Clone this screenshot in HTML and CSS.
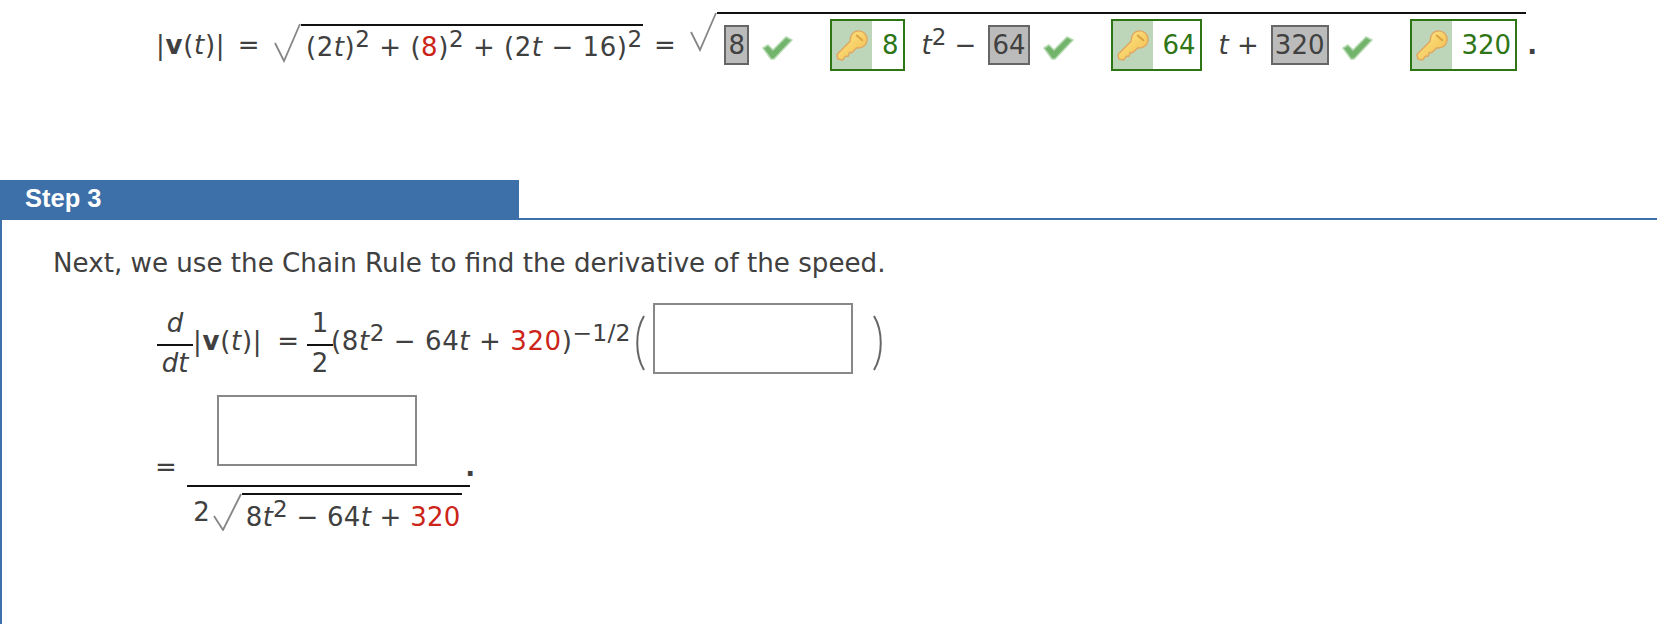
FILE: index.html
```html
<!DOCTYPE html>
<html lang="en">
<head>
    <meta charset="UTF-8">
    <meta name="viewport" content="width=device-width, initial-scale=1.0">
    <title>Step 3</title>
    <link rel="stylesheet" href="styles.css">
</head>
<body>
    <svg class="icon-defs" width="0" height="0">
        <defs>
            <linearGradient id="key-fill" x1="0" y1="0" x2="1" y2="1">
                <stop offset="0" stop-color="#fdeb8c"/>
                <stop offset="1" stop-color="#f2b94a"/>
            </linearGradient>
            <symbol id="key" viewBox="0 0 34 34">
                <path d="M1 27 L15 13 C15 7 18 2 24 2 C29 2 33 6 33 11 C33 17 28 21 22 20 L17 25 L14 25 L13 29 L10 29 L7 33 L2 32 Z" fill="url(#key-fill)" stroke="#e0a860" stroke-width="1.500" stroke-linejoin="round"/>
                <path d="M22 7 L28 12" fill="none" stroke="#d9a13f" stroke-width="2" stroke-linecap="round"/>
            </symbol>
            <symbol id="check" viewBox="0 0 31 24">
                <path d="M1 12 L6 9 L11 14 L24 1 L30 4 L12 23 L9 23 Z" fill="#72b46c" stroke="#b5d9b0" stroke-width="1.500" stroke-linejoin="round"/>
            </symbol>
        </defs>
    </svg>

    <div class="math-top">
        <span class="mi abs">|<b>v</b>(<i>t</i>)|</span>
        <span class="eq">=</span>
        <span class="sqrt">
            <svg class="radical radical-small" viewBox="0 0 27 40"><path d="M1 20 L10 38 L26 1"/></svg>
            <span class="radicand radicand-small">(2<i>t</i>)<sup>2</sup> + (<span class="red">8</span>)<sup>2</sup> + (2<i>t</i> − 16)<sup>2</sup></span>
        </span>
        <span class="eq eq-second">=</span>
        <span class="sqrt">
            <svg class="radical radical-big" viewBox="0 0 27 40"><path d="M1 20 L10 38 L26 1"/></svg>
            <span class="radicand radicand-big">
                <span class="given">8</span>
                <svg class="check"><use href="#check"/></svg>
                <span class="answer"><span class="key-cell"><svg class="key"><use href="#key"/></svg></span><span class="answer-val">8</span></span>
                <span class="term"><i>t</i><sup>2</sup> −</span>
                <span class="given">64</span>
                <svg class="check"><use href="#check"/></svg>
                <span class="answer"><span class="key-cell"><svg class="key"><use href="#key"/></svg></span><span class="answer-val">64</span></span>
                <span class="term"><i>t</i> +</span>
                <span class="given">320</span>
                <svg class="check"><use href="#check"/></svg>
                <span class="answer"><span class="key-cell"><svg class="key"><use href="#key"/></svg></span><span class="answer-val">320</span></span>
            </span>
        </span>
        <span class="end-dot">.</span>
    </div>

    <div class="step-head">Step 3</div>
    <div class="step-body">
        <p class="step-text">Next, we use the Chain Rule to find the derivative of the speed.</p>

        <div class="eq-one">
            <span class="frac frac-d"><span class="num"><i>d</i></span><span class="den"><i>dt</i></span></span>
            <span class="mi abs">|<b>v</b>(<i>t</i>)|</span>
            <span class="eq">=</span>
            <span class="frac frac-half"><span class="num">1</span><span class="den">2</span></span>
            <span class="mi mi-long">(8<i>t</i><sup>2</sup> − 64<i>t</i> + <span class="red">320</span>)<sup class="sup-power">−1/2</sup></span>
            <svg class="paren" viewBox="0 0 12 56"><path d="M11 1 C2 16 2 40 11 55"/></svg>
            <span class="blank"></span>
            <svg class="paren paren-close" viewBox="0 0 12 56"><path d="M1 1 C10 16 10 40 1 55"/></svg>
        </div>

        <div class="eq-two">
            <span class="eq eq-lead">=</span>
            <span class="big-frac">
                <span class="big-num"><span class="blank"></span></span>
                <span class="big-den">
                    <span class="coef">2</span>
                    <svg class="radical radical-den" viewBox="0 0 29 38"><path d="M1 23 L10 37 L28 1"/></svg>
                    <span class="radicand radicand-den">8<i>t</i><sup>2</sup> − 64<i>t</i> + <span class="red">320</span></span>
                </span>
            </span>
            <span class="end-dot end-dot-two">.</span>
        </div>
    </div>
</body>
</html>
```

FILE: styles.css
```css
html, body {
    margin: 0;
    padding: 0;
    height: 624px;
    overflow: hidden;
    background: white;
}
body {
    font-family: "DejaVu Sans", Verdana, sans-serif;
    font-size: 26px;
    color: #404040;
}
.icon-defs {
    position: absolute;
}
sup {
    font-size: 23px;
    line-height: 0;
    vertical-align: 9px;
}
.red {
    color: #cc2418;
}
.abs {
    letter-spacing: 0.7px;
}

/* Top equation */
.math-top {
    display: flex;
    align-items: center;
    height: 66px;
    padding: 12px 0 0 156px;
    margin-bottom: 102px;
}
.eq {
    margin: 0 14.500px 0 12.500px;
}
.eq-second {
    margin-left: 11.500px;
}
.sqrt {
    display: flex;
    align-items: flex-end;
}
.radical {
    fill: none;
    stroke: #858585;
    stroke-width: 1.800;
    flex: none;
}
.radical-small {
    width: 27px;
    height: 40px;
    margin-bottom: 5px;
}
.radical-big {
    width: 27px;
    height: 40px;
    margin-bottom: 26px;
}
.radicand {
    border-top: 2px solid #111;
    white-space: nowrap;
}
.radicand-small {
    line-height: 42px;
    padding-left: 5px;
    letter-spacing: 0.55px;
}
.radicand-big {
    display: flex;
    align-items: center;
    height: 66px;
    padding: 0 9px 3px 7px;
    box-sizing: border-box;
}
.given {
    border: 2px solid #666;
    background: #bbb;
    padding: 0 2px;
    height: 40px;
    line-height: 36px;
    box-sizing: border-box;
    margin-right: 13px;
}
.check {
    width: 31px;
    height: 24px;
    margin-top: 6px;
}
.answer {
    display: flex;
    border: 2px solid #2e7516;
    height: 52px;
    box-sizing: border-box;
    margin-left: 37px;
}
.key-cell {
    display: flex;
    align-items: center;
    justify-content: center;
    width: 40px;
    background: #bdd5b8;
}
.key {
    width: 32px;
    height: 32px;
}
.answer-val {
    color: #2e7516;
    line-height: 48px;
    padding: 0 4px 0 10px;
}
.term {
    margin: 0 12px 0 17px;
}
.end-dot {
    margin-left: 1px;
    font-weight: bold;
}

/* Step panel */
.step-head {
    width: 519px;
    height: 38px;
    line-height: 37px;
    padding-left: 25px;
    box-sizing: border-box;
    background: #3d6fa8;
    color: white;
    font-family: "Liberation Sans", Arial, sans-serif;
    font-weight: bold;
    font-size: 25.500px;
}
.step-body {
    border-top: 2px solid #3d6fa8;
    border-left: 2px solid #3d6fa8;
    height: 404px;
    padding-left: 51px;
}
.step-text {
    margin: 29px 0 0;
    line-height: 28px;
    font-size: 26.150px;
}

/* Equations */
.eq-one {
    display: flex;
    align-items: flex-start;
    height: 71px;
    margin-top: 26px;
    padding-left: 104px;
}
.eq-one .mi, .eq-one .eq {
    line-height: 71px;
    margin-top: 3px;
}
.eq-one .eq {
    margin-left: 15px;
    margin-right: 8px;
}
.frac {
    display: flex;
    flex-direction: column;
    align-items: center;
}
.num {
    border-bottom: 2px solid #111;
    align-self: stretch;
    line-height: 41px;
    text-align: center;
}
.den {
    line-height: 26px;
    padding-top: 4px;
}
.frac-d {
    width: 36px;
}
.frac-half {
    width: 26px;
    margin-right: -2px;
}
.mi-long {
    letter-spacing: 0.6px;
}
.sup-power {
    font-size: 23.500px;
    letter-spacing: 0.2px;
}
.paren {
    width: 12px;
    height: 56px;
    margin: 12px 0 0 2px;
    fill: none;
    stroke: #666;
    stroke-width: 2;
    flex: none;
}
.paren-close {
    margin-left: 20px;
}
.blank {
    display: block;
    width: 200px;
    height: 71px;
    box-sizing: border-box;
    border: 2px solid #888;
    background: white;
}
.eq-one .blank {
    margin-left: 8px;
}
.eq-two {
    display: flex;
    align-items: center;
    margin-top: 21px;
    padding-left: 102px;
}
.eq-lead {
    margin: 0 10.500px 0 0;
}
.big-frac {
    display: flex;
    flex-direction: column;
    width: 283px;
}
.big-num {
    border-bottom: 2px solid #111;
    padding: 0 0 19px 30px;
}
.big-den {
    display: flex;
    align-items: flex-start;
    padding: 6px 0 0 6px;
}
.coef {
    line-height: 38px;
}
.radical-den {
    width: 29px;
    height: 38px;
    margin-left: 3px;
}
.radicand-den {
    line-height: 44px;
    padding: 0 1px 0 4px;
    letter-spacing: 0.25px;
}
.end-dot-two {
    margin: 0 0 0 -5px;
}
```
